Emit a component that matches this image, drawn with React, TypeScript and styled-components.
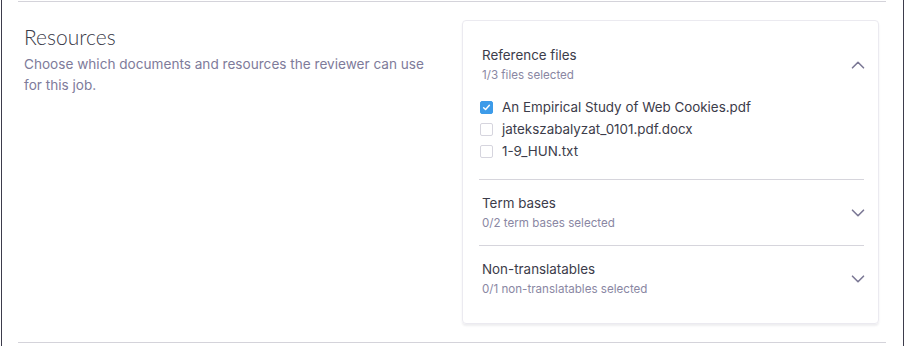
import styled, { createGlobalStyle } from 'styled-components';

const GlobalStyle = createGlobalStyle`
  html, body {
    margin: 0;
    padding: 0;
    background: #ffffff;
  }
  body {
    font-family: Inter, 'Noto Sans', sans-serif;
    color: #3b3b4a;
  }
`;

const Frame = styled.div`
  box-sizing: border-box;
  width: 903px;
  height: 346px;
  margin-left: 1px;
  border-left: 1px solid #3d3c4c;
  border-right: 1px solid #3d3c4c;
  padding: 1px 17px 0 16px;
`;

const Section = styled.section`
  display: grid;
  grid-template-columns: 1fr 417px;
  column-gap: 20px;
  height: 342px;
  box-sizing: border-box;
  border-top: 1px solid #d4d3da;
  border-bottom: 1px solid #d4d3da;
  padding: 18px 7px 18px 6px;
`;

const Intro = styled.div`
  padding-top: 4px;
`;

const Heading = styled.h2`
  margin: 0 0 4px;
  font-family: Lato, 'Noto Sans', sans-serif;
  font-weight: 300;
  font-size: 21px;
  line-height: 26px;
  color: #3a3a48;
`;

const Lead = styled.p`
  margin: 0;
  font-size: 13.6px;
  line-height: 21px;
  color: #7e7b9a;
`;

const Card = styled.div`
  box-sizing: border-box;
  border: 1px solid #ebeaf0;
  border-radius: 4px;
  box-shadow: 0 2px 2px rgba(40, 40, 60, 0.08);
  padding: 11px 14px 0 16px;
`;

const Panel = styled.div<{ $last?: boolean }>`
  border-bottom: ${(p) => (p.$last ? 'none' : '1px solid #d6d5dc')};
`;

const PanelHead = styled.div`
  display: flex;
  align-items: center;
  justify-content: space-between;
  padding: 14px 0 14px 3px;
`;

const PanelTitle = styled.div`
  font-size: 13.4px;
  line-height: 18px;
  color: #3c3c4a;
`;

const PanelSub = styled.div`
  margin-top: 4px;
  font-size: 11.6px;
  line-height: 15px;
  color: #8a87a3;
`;

const Chevron = styled.svg`
  width: 14px;
  height: 14px;
  margin-right: -1px;
  color: #7b7895;
`;

const FileList = styled.ul`
  list-style: none;
  margin: 0;
  padding: 2px 0 20px 1px;
  display: flex;
  flex-direction: column;
  gap: 6px;
`;

const FileRow = styled.li`
  display: flex;
  align-items: center;
  gap: 9px;
  height: 16px;
  font-size: 13.4px;
  line-height: 16px;
  color: #3c3c4a;
`;

const Box = styled.span<{ $checked?: boolean }>`
  box-sizing: border-box;
  width: 13px;
  height: 13px;
  border-radius: 2px;
  border: 1px solid ${(p) => (p.$checked ? '#3d9be9' : '#d6d5de')};
  background: ${(p) => (p.$checked ? '#3d9be9' : '#ffffff')};
  display: flex;
  align-items: center;
  justify-content: center;
`;

const Check = () => (
  <svg width="9" height="9" viewBox="0 0 10 10">
    <path d="M1.8 5.2 L4 7.3 L8.2 2.6" fill="none" stroke="#fff" strokeWidth="1.6" strokeLinecap="round" strokeLinejoin="round" />
  </svg>
);

const ChevronIcon = ({ up }: { up?: boolean }) => (
  <Chevron viewBox="0 0 14 14">
    <path
      d={up ? 'M1.5 9.8 L7 4.3 L12.5 9.8' : 'M1.5 4.2 L7 9.7 L12.5 4.2'}
      fill="none"
      stroke="currentColor"
      strokeWidth="1.6"
      strokeLinecap="round"
      strokeLinejoin="round"
    />
  </Chevron>
);

const files = [
  { name: 'An Empirical Study of Web Cookies.pdf', checked: true },
  { name: 'jatekszabalyzat_0101.pdf.docx', checked: false },
  { name: '1-9_HUN.txt', checked: false },
];

const App = () => {
  return (
    <>
      <GlobalStyle />
      <Frame>
        <Section>
          <Intro>
            <Heading>Resources</Heading>
            <Lead>
              Choose which documents and resources the reviewer can use
              <br />
              for this job.
            </Lead>
          </Intro>
          <Card>
            <Panel>
              <PanelHead>
                <div>
                  <PanelTitle>Reference files</PanelTitle>
                  <PanelSub>1/3 files selected</PanelSub>
                </div>
                <ChevronIcon up />
              </PanelHead>
              <FileList>
                {files.map((f) => (
                  <FileRow key={f.name}>
                    <Box $checked={f.checked}>{f.checked && <Check />}</Box>
                    {f.name}
                  </FileRow>
                ))}
              </FileList>
            </Panel>
            <Panel>
              <PanelHead>
                <div>
                  <PanelTitle>Term bases</PanelTitle>
                  <PanelSub>0/2 term bases selected</PanelSub>
                </div>
                <ChevronIcon />
              </PanelHead>
            </Panel>
            <Panel $last>
              <PanelHead>
                <div>
                  <PanelTitle>Non-translatables</PanelTitle>
                  <PanelSub>0/1 non-translatables selected</PanelSub>
                </div>
                <ChevronIcon />
              </PanelHead>
            </Panel>
          </Card>
        </Section>
      </Frame>
    </>
  );
};

export default App;
